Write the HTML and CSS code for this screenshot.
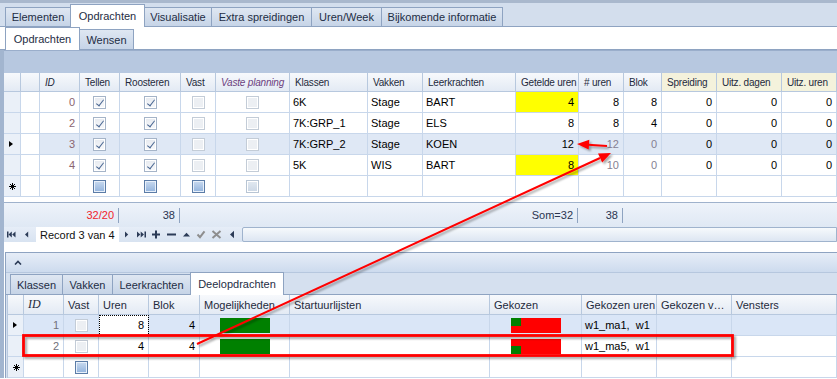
FILE: index.html
```html
<!DOCTYPE html>
<html>
<head>
    <meta charset="utf-8">
    <title>Opdrachten</title>
    <link rel="stylesheet" href="styles.css">
</head>
<body>
<div class="app">
    <div class="topline"></div>
    <div class="tabs">
        <div class="tab t-elem">Elementen</div>
        <div class="tab t-opdr on">Opdrachten</div>
        <div class="tab t-vis">Visualisatie</div>
        <div class="tab t-extra">Extra spreidingen</div>
        <div class="tab t-uren">Uren/Week</div>
        <div class="tab t-bijk">Bijkomende informatie</div>
    </div>
    <div class="subtabs">
        <div class="tab s-opdr on">Opdrachten</div>
        <div class="tab s-wens">Wensen</div>
    </div>

    <div class="work">
        <div class="grp"></div>

        <!-- hoofdgrid: opdrachten -->
        <div class="mrow mhead">
            <div class="hc"></div>
            <div class="hc"></div>
            <div class="hc it">ID</div>
            <div class="hc">Tellen</div>
            <div class="hc">Roosteren</div>
            <div class="hc">Vast</div>
            <div class="hc it purple">Vaste planning</div>
            <div class="hc">Klassen</div>
            <div class="hc">Vakken</div>
            <div class="hc">Leerkrachten</div>
            <div class="hc">Getelde uren</div>
            <div class="hc"># uren</div>
            <div class="hc">Blok</div>
            <div class="hc yel">Spreiding</div>
            <div class="hc yel">Uitz. dagen</div>
            <div class="hc yel">Uitz. uren</div>
        </div>

        <div class="mrow">
            <div class="c ind"></div>
            <div class="c"></div>
            <div class="c n id">0</div>
            <div class="c k"><span class="cb on"></span></div>
            <div class="c k"><span class="cb on"></span></div>
            <div class="c k"><span class="cb dis"></span></div>
            <div class="c k"><span class="cb dis"></span></div>
            <div class="c">6K</div>
            <div class="c">Stage</div>
            <div class="c">BART</div>
            <div class="c n hl">4</div>
            <div class="c n">8</div>
            <div class="c n">8</div>
            <div class="c n">0</div>
            <div class="c n">0</div>
            <div class="c n">0</div>
        </div>
        <div class="mrow">
            <div class="c ind"></div>
            <div class="c"></div>
            <div class="c n id">2</div>
            <div class="c k"><span class="cb on"></span></div>
            <div class="c k"><span class="cb on"></span></div>
            <div class="c k"><span class="cb dis"></span></div>
            <div class="c k"><span class="cb dis"></span></div>
            <div class="c">7K:GRP_1</div>
            <div class="c">Stage</div>
            <div class="c">ELS</div>
            <div class="c n">8</div>
            <div class="c n">8</div>
            <div class="c n">4</div>
            <div class="c n">0</div>
            <div class="c n">0</div>
            <div class="c n">0</div>
        </div>
        <div class="mrow sel">
            <div class="c ind"><span class="tri"></span></div>
            <div class="c"></div>
            <div class="c n id">3</div>
            <div class="c k"><span class="cb on"></span></div>
            <div class="c k"><span class="cb on"></span></div>
            <div class="c k"><span class="cb dis"></span></div>
            <div class="c k"><span class="cb dis"></span></div>
            <div class="c">7K:GRP_2</div>
            <div class="c">Stage</div>
            <div class="c">KOEN</div>
            <div class="c n">12</div>
            <div class="c n grey">12</div>
            <div class="c n grey">0</div>
            <div class="c n">0</div>
            <div class="c n">0</div>
            <div class="c n">0</div>
        </div>
        <div class="mrow">
            <div class="c ind"></div>
            <div class="c"></div>
            <div class="c n id">4</div>
            <div class="c k"><span class="cb on"></span></div>
            <div class="c k"><span class="cb on"></span></div>
            <div class="c k"><span class="cb dis"></span></div>
            <div class="c k"><span class="cb dis"></span></div>
            <div class="c">5K</div>
            <div class="c">WIS</div>
            <div class="c">BART</div>
            <div class="c n hl">8</div>
            <div class="c n grey">10</div>
            <div class="c n grey">0</div>
            <div class="c n">0</div>
            <div class="c n">0</div>
            <div class="c n">0</div>
        </div>
        <div class="mrow">
            <div class="c ind"><svg class="star" width="7" height="7" viewBox="0 0 7 7"><path d="M3.5 0V7M0 3.5H7M1 1L6 6M6 1L1 6" stroke="#000" stroke-width="1"/></svg></div>
            <div class="c"></div>
            <div class="c"></div>
            <div class="c k"><span class="cb nw"></span></div>
            <div class="c k"><span class="cb nw"></span></div>
            <div class="c k"><span class="cb nw"></span></div>
            <div class="c k"><span class="cb nwdis"></span></div>
            <div class="c"></div>
            <div class="c"></div>
            <div class="c"></div>
            <div class="c"></div>
            <div class="c"></div>
            <div class="c"></div>
            <div class="c"></div>
            <div class="c"></div>
            <div class="c"></div>
        </div>
        <div class="blank"></div>

        <div class="mrow foot">
            <div></div><div></div><div></div>
            <div class="f"><span class="red">32/20</span></div>
            <div class="f"><span>38</span></div>
            <div></div><div></div><div></div><div></div><div></div>
            <div class="f"><span>Som=32</span></div>
            <div class="f"><span>38</span></div>
            <div></div><div></div><div></div><div></div>
        </div>

        <div class="nav">
            <svg class="navl" width="32" height="15" viewBox="0 0 32 15">
                <g fill="#2b3b57">
                    <rect x="3" y="4.5" width="1.5" height="6"/>
                    <polygon points="4.5,7.5 7.8,4.5 7.8,10.5"/>
                    <polygon points="8.2,7.5 11.5,4.5 11.5,10.5"/>
                    <polygon points="21,7.5 24.2,4.5 24.2,10.5"/>
                </g>
            </svg>
            <div class="rec">Record 3 van 4</div>
            <svg class="navr" width="123" height="15" viewBox="0 0 123 15">
                <g fill="#2b3b57">
                    <polygon points="6,4.5 9.2,7.5 6,10.5"/>
                    <polygon points="18,4.5 21.3,7.5 18,10.5"/>
                    <polygon points="21.7,4.5 25,7.5 21.7,10.5"/>
                    <rect x="25.5" y="4.5" width="1.5" height="6"/>
                    <rect x="33" y="6.5" width="8" height="2"/>
                    <rect x="36" y="3.5" width="2" height="8"/>
                    <rect x="48" y="6.5" width="9" height="2"/>
                    <polygon points="64,9.5 67.5,5.8 71,9.5"/>
                    <polygon points="111,7.5 115,3.8 115,11.2"/>
                </g>
                <g stroke="#8e8e8e" stroke-width="2" fill="none">
                    <polyline points="78.5,7.5 81,10.2 85.5,4.3"/>
                    <path d="M93.5 4L101.5 11M101.5 4L93.5 11"/>
                </g>
            </svg>
            <div class="hscroll"></div>
        </div>
        <div class="gap"></div>

        <!-- detailpaneel: deelopdrachten -->
        <div class="detail">
            <div class="dhead">
                <svg width="8" height="5" viewBox="0 0 8 5"><polyline points="1,4.5 4,1.5 7,4.5" fill="none" stroke="#2b3b57" stroke-width="1.6"/></svg>
            </div>
            <div class="dtabs">
                <div class="tab d-kl">Klassen</div>
                <div class="tab d-va">Vakken</div>
                <div class="tab d-le">Leerkrachten</div>
                <div class="tab d-de on">Deelopdrachten</div>
            </div>
            <div class="dgrid">
                <div class="drow dhr">
                    <div class="hc"></div>
                    <div class="hc serif">ID</div>
                    <div class="hc">Vast</div>
                    <div class="hc">Uren</div>
                    <div class="hc">Blok</div>
                    <div class="hc">Mogelijkheden</div>
                    <div class="hc">Startuurlijsten</div>
                    <div class="hc">Gekozen</div>
                    <div class="hc">Gekozen uren</div>
                    <div class="hc">Gekozen v…</div>
                    <div class="hc">Vensters</div>
                </div>
                <div class="drow dsel">
                    <div class="c ind"><span class="tri"></span></div>
                    <div class="c n id">1</div>
                    <div class="c k"><span class="cb dis"></span></div>
                    <div class="c n focus">8</div>
                    <div class="c n">4</div>
                    <div class="c k"><span class="gbar"></span></div>
                    <div class="c"></div>
                    <div class="c k"><span class="kbar"><span class="g"></span></span></div>
                    <div class="c">w1_ma1,&nbsp; w1</div>
                    <div class="c"></div>
                    <div class="c"></div>
                </div>
                <div class="drow">
                    <div class="c ind"></div>
                    <div class="c n id">2</div>
                    <div class="c k"><span class="cb dis"></span></div>
                    <div class="c n">4</div>
                    <div class="c n">4</div>
                    <div class="c k"><span class="gbar"></span></div>
                    <div class="c"></div>
                    <div class="c k"><span class="kbar bot"><span class="g"></span></span></div>
                    <div class="c">w1_ma5,&nbsp; w1</div>
                    <div class="c"></div>
                    <div class="c"></div>
                </div>
                <div class="drow">
                    <div class="c ind"><svg class="star" width="7" height="7" viewBox="0 0 7 7"><path d="M3.5 0V7M0 3.5H7M1 1L6 6M6 1L1 6" stroke="#000" stroke-width="1"/></svg></div>
                    <div class="c"></div>
                    <div class="c k"><span class="cb nw"></span></div>
                    <div class="c"></div>
                    <div class="c"></div>
                    <div class="c"></div>
                    <div class="c"></div>
                    <div class="c"></div>
                    <div class="c"></div>
                    <div class="c"></div>
                    <div class="c"></div>
                </div>
            </div>
        </div>
    </div>

    <!-- annotaties -->
    <svg class="annot" width="837" height="379" viewBox="0 0 837 379">
        <defs>
            <filter id="sh" x="-5%" y="-5%" width="110%" height="120%">
                <feDropShadow dx="2" dy="2" stdDeviation="1.2" flood-color="#000" flood-opacity="0.35"/>
            </filter>
        </defs>
        <g filter="url(#sh)">
            <rect x="23.5" y="335.5" width="709" height="20" fill="none" stroke="#f00" stroke-width="2.8"/>
            <line x1="607" y1="146" x2="588" y2="144.8" stroke="#f00" stroke-width="2"/>
            <polygon points="577,144 589.3,139.8 588.7,149.6" fill="#f00"/>
            <line x1="197" y1="344" x2="600" y2="158" stroke="#f00" stroke-width="2"/>
            <polygon points="611,153 602.2,162.4 598,153.6" fill="#f00"/>
        </g>
    </svg>
</div>
</body>
</html>
```

FILE: styles.css
```css
* {
    box-sizing: border-box;
}

body {
    margin: 0;
    font-family: "Liberation Sans", Arial, sans-serif;
    font-size: 11px;
    color: #000;
    background: #fff;
}

.app {
    position: relative;
    width: 837px;
    height: 379px;
    overflow: hidden;
    background: #fff;
}

.topline {
    height: 3px;
    background: #a9b8cd;
}

/* tabs */
.tabs {
    display: flex;
    align-items: flex-end;
    height: 24px;
    padding-left: 5px;
    background: #d3deed;
    border-bottom: 1px solid #8ea3c1;
}

.tab {
    height: 19px;
    margin-right: -1px;
    border: 1px solid #8ea3c1;
    border-bottom: none;
    background: linear-gradient(#dfe7f2, #c6d4e7);
    color: #1e2d44;
    display: flex;
    align-items: center;
    justify-content: center;
    white-space: nowrap;
}

.tab.on {
    height: 23px;
    margin-bottom: -1px;
    background: #fff;
    position: relative;
    z-index: 1;
}

.t-elem { width: 66px; }
.t-opdr { width: 75px; }
.t-vis { width: 68px; }
.t-extra { width: 101px; }
.t-uren { width: 71px; }
.t-bijk { width: 122px; }

.subtabs {
    display: flex;
    align-items: flex-end;
    height: 23px;
    padding-left: 5px;
    background: #fff;
    border-bottom: 1px solid #8ea3c1;
}

.subtabs .tab { height: 20px; }
.subtabs .tab.on { height: 23px; }
.s-opdr { width: 75px; }
.s-wens { width: 55px; }

/* werkgebied */
.work {
    border-left: 4px solid #a2b5cf;
}

.grp {
    height: 23px;
    background: #b7c8e0;
    border-top: 1px solid #9aaecb;
}

.mrow {
    display: grid;
    grid-template-columns: 17px 19px 40px 40px 61px 35px 74px 78px 55px 93px 63px 45px 38px 55px 65px 1fr;
    height: 21px;
}

.mhead {
    height: 19px;
}

.hc {
    display: flex;
    align-items: center;
    padding-left: 5px;
    white-space: nowrap;
    overflow: hidden;
    background: linear-gradient(#f7f9fc, #e3eaf4);
    border-right: 1px solid #b7c8de;
    border-bottom: 1px solid #b7c8de;
    color: #1e2a3c;
}

.mhead .hc {
    font-size: 10px;
    letter-spacing: -0.2px;
}

.hc.it { font-style: italic; }
.hc.purple { color: #6c3f7e; }
.hc.yel { background: #f4f2dc; }
.hc.serif { font-family: "Liberation Serif", "Times New Roman", serif; font-style: italic; font-size: 12px; }

.c {
    display: flex;
    align-items: center;
    padding: 0 3px;
    white-space: nowrap;
    overflow: hidden;
    border-right: 1px solid #c8d7eb;
    border-bottom: 1px solid #c8d7eb;
}

.c.n { justify-content: flex-end; padding-right: 4px; }
.c.k { justify-content: center; }
.c.id { color: #8a6470; }
.c.grey { color: #857f92; }
.c.hl { background: #ffff00; }

.c.ind {
    background: #eaf0f8;
    padding-left: 5px;
}

.sel .c:nth-child(n+3) {
    background: #dfe8f5;
}

.tri {
    width: 0;
    height: 0;
    border-left: 4px solid #000;
    border-top: 3.5px solid transparent;
    border-bottom: 3.5px solid transparent;
}

/* checkboxes */
.cb {
    position: relative;
    width: 13px;
    height: 13px;
    border: 1px solid #a5b4c8;
    background: linear-gradient(#e6eaf0, #f8f9fb);
    box-shadow: inset 0 0 0 1px #fff;
}

.cb.on::after {
    content: "";
    position: absolute;
    left: 4px;
    top: 1px;
    width: 3px;
    height: 7px;
    border: solid #4a6792;
    border-width: 0 1.6px 1.6px 0;
    transform: rotate(38deg);
}

.cb.dis {
    border-color: #c3ccd7;
    background: #eceff3;
}

.cb.nw {
    border-color: #5b7ca7;
    background: linear-gradient(#c9daef, #92b3dd);
    box-shadow: inset 0 0 0 1px #e8f0fa;
}

.cb.nwdis {
    border-color: #b8c5d4;
    background: linear-gradient(#e2e9f1, #cbd7e5);
}

.blank {
    height: 5px;
}

/* footer */
.foot {
    height: 25px;
    border-top: 1px solid #9fb2cc;
    background: linear-gradient(#eef3fa, #dfe8f4);
}

.foot .f {
    display: flex;
    align-items: center;
    justify-content: flex-end;
}

.foot .f span {
    display: flex;
    align-items: center;
    justify-content: flex-end;
    height: 15px;
    width: 100%;
    padding-right: 4px;
    border-right: 1px solid #8ea3c1;
    color: #2a3550;
    margin-right: 1px;
}

.foot .f span.red {
    color: #f01c2c;
}

/* navigator */
.nav {
    display: flex;
    height: 15px;
    background: linear-gradient(#e6edf7, #d8e3f1);
}

.rec {
    width: 83px;
    background: #fff;
    padding-left: 4px;
    display: flex;
    align-items: center;
    color: #111;
}

.hscroll {
    flex: 1;
    border: 1px solid #9fb3cd;
    border-radius: 2px 0 0 2px;
    background: linear-gradient(#f6f9fc, #dde6f2);
}

.gap {
    height: 10px;
}

/* detailpaneel */
.detail {
    margin-left: 1px;
    border-left: 1px solid #8ea3c1;
    border-top: 1px solid #8ea3c1;
    background: #d5e0ef;
}

.dhead {
    height: 19px;
    padding-left: 8px;
    display: flex;
    align-items: center;
    background: linear-gradient(#e6edf7, #cddbee);
}

.dtabs {
    display: flex;
    align-items: flex-end;
    height: 23px;
    padding-left: 4px;
    background: #d5e0ef;
    border-top: 1px solid #b6c7de;
    border-bottom: 1px solid #8ea3c1;
}

.dtabs .tab { height: 20px; }
.dtabs .tab.on { height: 23px; }
.d-kl { width: 53px; }
.d-va { width: 51px; }
.d-le { width: 79px; }
.d-de { width: 94px; }

.dgrid {
    margin-left: 1px;
    border-left: 1px solid #b7c8de;
    background: #fff;
}

.drow {
    display: grid;
    grid-template-columns: 16px 40px 35px 50px 51px 90px 200px 92px 75px 75px 1fr;
    height: 21px;
}

.drow.dhr {
    height: 20px;
}

.dhr .hc {
    padding-left: 4px;
}

.dsel .c:nth-child(n+2) {
    background: #dae6f7;
}

.dsel .c.focus {
    background: #fff;
    outline: 1px dotted #000;
    outline-offset: -1px;
}

.drow .c.id { color: #70707a; }

.gbar {
    width: 50px;
    height: 15px;
    background: #008000;
}

.kbar {
    display: flex;
    flex-direction: column;
    width: 50px;
    height: 15px;
    background: #ff0000;
}

.kbar.bot {
    justify-content: flex-end;
}

.kbar .g {
    width: 10px;
    height: 8px;
    background: #008000;
}

.annot {
    position: absolute;
    left: 0;
    top: 0;
    pointer-events: none;
}
```
